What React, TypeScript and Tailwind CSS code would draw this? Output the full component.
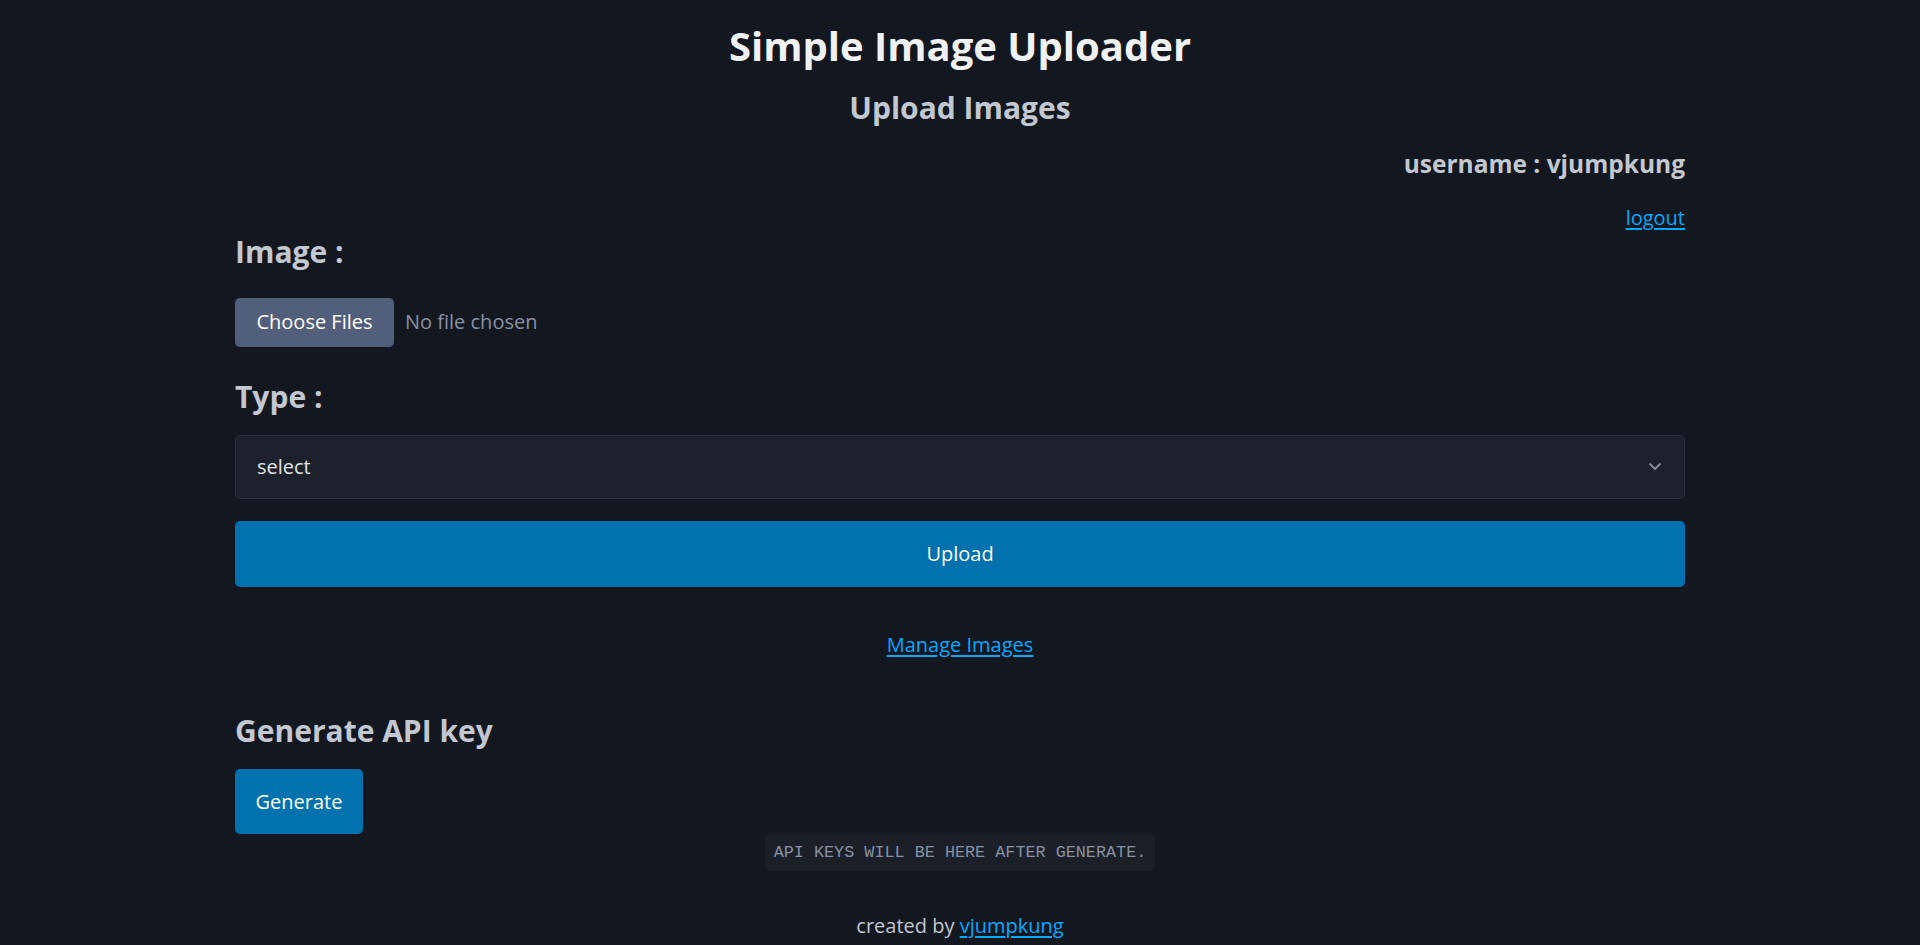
import React from "react";

export default function App() {
  return (
    <div
      className="min-h-[945px] w-full bg-[#13171f] text-[#c2c7d0] text-[20px]"
      style={{ fontFamily: '"Open Sans", "Noto Sans", sans-serif' }}
    >
      <div className="mx-auto w-[1450px] pt-[22px] pb-[10px]">
        <h1 className="text-center text-[40px] leading-[48px] font-bold text-[#f0f1f3]">
          Simple Image Uploader
        </h1>
        <h2 className="mt-[20px] text-center text-[30px] leading-[36px] font-bold text-[#c2c7d0]">
          Upload Images
        </h2>
        <div className="mt-[23px] text-right text-[24.5px] leading-[30px] font-bold">
          username : vjumpkung
        </div>
        <div className="mt-[23px] text-right leading-[31.5px]">
          <a className="text-[#01aaff] underline underline-offset-[3px]" href="#">
            logout
          </a>
        </div>
        <h3 className="mt-0 text-[30px] leading-[36px] font-bold">Image :</h3>
        <div className="mt-[28px] flex items-center">
          <button className="h-[49px] w-[159px] rounded-[5px] bg-[#525f7a] text-[#ffffff]">
            Choose Files
          </button>
          <span className="ml-[11px] text-[#8891a4]">No file chosen</span>
        </div>
        <h3 className="mt-[32px] text-[30px] leading-[36px] font-bold">Type :</h3>
        <div className="mt-[20px] flex h-[64px] items-center justify-between rounded-[5px] border border-[#2a3140] bg-[#1c212c] pl-[21px] pr-[22px] text-[#e0e3e7]">
          <span>select</span>
          <svg width="14" height="9" viewBox="0 0 14 9" fill="none">
            <path d="M1.5 1.5 L7 7 L12.5 1.5" stroke="#8891a4" strokeWidth="1.8" />
          </svg>
        </div>
        <button className="mt-[22px] h-[66px] w-full rounded-[5px] bg-[#0172ad] text-white">
          Upload
        </button>
        <div className="mt-[42px] text-center leading-[31.5px]">
          <a className="text-[#01aaff] underline underline-offset-[3px]" href="#">
            Manage Images
          </a>
        </div>
        <h3 className="mt-[53px] text-[30px] leading-[36px] font-bold">Generate API key</h3>
        <button className="mt-[20px] h-[65px] w-[128px] rounded-[5px] bg-[#0172ad] text-white">
          Generate
        </button>
        <div className="flex justify-center">
          <code
            className="flex h-[37px] items-center rounded-[5px] bg-[#1a1f28] px-[9px] text-[16.8px] text-[#8891a4]"
            style={{ fontFamily: '"Liberation Mono", monospace' }}
          >
            API KEYS WILL BE HERE AFTER GENERATE.
          </code>
        </div>
        <div className="mt-[39px] text-center leading-[31.5px]">
          created by{" "}
          <a className="text-[#01aaff] underline underline-offset-[3px]" href="#">
            vjumpkung
          </a>
        </div>
      </div>
    </div>
  );
}
